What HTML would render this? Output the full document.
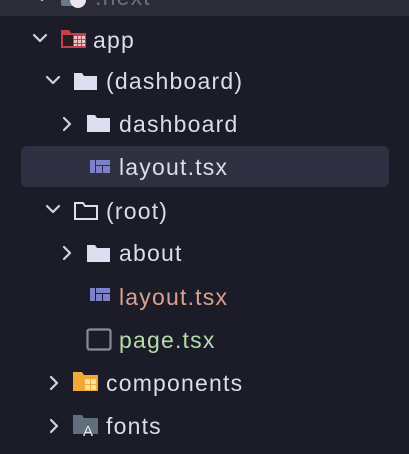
<!DOCTYPE html>
<html><head><style>
body{margin:0;width:409px;height:454px;background:#1b1c28;overflow:hidden;font-family:"Liberation Sans",sans-serif;position:relative}
.top{position:absolute;left:0;top:0;width:409px;height:16px;background:#2b2c37}
.hl{position:absolute;left:21px;top:146px;width:368px;height:41px;background:#2f3142;border-radius:6px}
.r{position:absolute;height:30px;line-height:30px;font-size:23px;letter-spacing:1.2px;color:#dcdde6;white-space:nowrap}
svg{position:absolute}
</style></head><body>
<div class="top"></div>
<div class="hl"></div>
<svg width="409" height="454" style="left:0;top:0">
<g fill="none" stroke="#d0d2dc" stroke-width="2.2" stroke-linecap="round" stroke-linejoin="round">
<path d="M34 35l6 6 6-6"/>
<path d="M47 77l6 6 6-6"/>
<path d="M64 118l6 6-6 6"/>
<path d="M47 206l6 6 6-6"/>
<path d="M64 247l6 6-6 6"/>
<path d="M51 377l6 6-6 6"/>
<path d="M51 420l6 6-6 6"/>
<path d="M36 -6l6 6 6-6"/>
</g>
<rect x="61" y="-8" width="22" height="14" rx="2" fill="#6b7a85"/>
<circle cx="78" cy="0" r="8" fill="#e8e8ec"/>
<path d="M61 30h8l2 3h15v15H61z" fill="#c2414a"/>
<rect x="63" y="35" width="10" height="11" fill="#2a1d25"/>
<g fill="#f2c0c4"><rect x="74" y="36" width="3" height="3"/><rect x="78" y="36" width="3" height="3"/><rect x="82" y="36" width="3" height="3"/><rect x="74" y="40" width="3" height="3"/><rect x="78" y="40" width="3" height="3"/><rect x="82" y="40" width="3" height="3"/><rect x="74" y="44" width="3" height="2"/><rect x="78" y="44" width="3" height="2"/><rect x="82" y="44" width="3" height="2"/></g>
<path d="M74 73h8l2 3h13v14H74z" fill="#dcdff0" />
<path d="M87 115h8l2 3h13v14H87z" fill="#dcdff0"/>
<path d="M75 203h8l2 3h12v13H75z" fill="none" stroke="#dcdff0" stroke-width="2"/>
<path d="M87 245h8l2 3h13v14H87z" fill="#dcdff0"/>
<g fill="#7c82c8"><rect x="90" y="160" width="5" height="13"/><rect x="96" y="160" width="14" height="5"/><rect x="96" y="166" width="6" height="7"/><rect x="103" y="166" width="7" height="7"/></g>
<g fill="#7c82c8"><rect x="90" y="288" width="5" height="13"/><rect x="96" y="288" width="14" height="5"/><rect x="96" y="294" width="6" height="7"/><rect x="103" y="294" width="7" height="7"/></g>
<rect x="87.5" y="329.5" width="23" height="20" rx="2" fill="none" stroke="#8a8b95" stroke-width="2.2"/>
<path d="M73 372h9l2 3h14v16H73z" fill="#f0a836"/>
<g fill="#fbe0a4"><rect x="85" y="379" width="5" height="5"/><rect x="91" y="379" width="5" height="5"/><rect x="85" y="385" width="5" height="5"/><rect x="91" y="385" width="5" height="5"/></g>
<path d="M73 415h9l2 3h14v16H73z" fill="#5f6e7a"/>
<text x="83" y="436" font-family="Liberation Sans" font-size="15" fill="#dfe4ea">A</text>
</svg>
<div class="r" style="left:95px;top:-18px;color:#6c6e79">.next</div>
<div class="r" style="left:93px;top:25px">app</div>
<div class="r" style="left:106px;top:66px">(dashboard)</div>
<div class="r" style="left:119px;top:109px">dashboard</div>
<div class="r" style="left:119px;top:152px">layout.tsx</div>
<div class="r" style="left:106px;top:196px">(root)</div>
<div class="r" style="left:119px;top:238px">about</div>
<div class="r" style="left:119px;top:282px;color:#d9a28f">layout.tsx</div>
<div class="r" style="left:119px;top:325px;color:#b4dcaa">page.tsx</div>
<div class="r" style="left:106px;top:368px">components</div>
<div class="r" style="left:106px;top:411px">fonts</div>
</body></html>
